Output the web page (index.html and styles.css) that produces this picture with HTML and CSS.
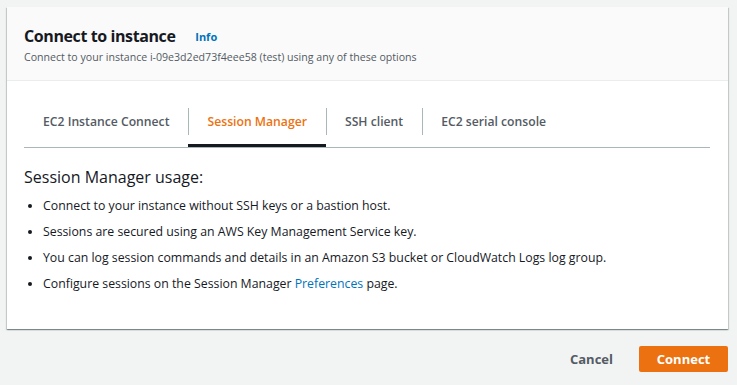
FILE: index.html
```
<!DOCTYPE html>
<html lang="en">
<head>
    <meta charset="UTF-8">
    <meta name="viewport" content="width=device-width, initial-scale=1.0">
    <title>Connect to instance</title>
    <link rel="stylesheet" href="styles.css">
</head>
<body>
    <div class="card">
        <div class="card-header">
            <h2>Connect to instance <a href="#" class="info">Info</a></h2>
            <p>Connect to your instance i-09e3d2ed73f4eee58 (test) using any of these options</p>
        </div>
        <div class="card-body">
            <div class="tabs">
                <button class="tab">EC2 Instance Connect</button>
                <button class="tab active">Session Manager</button>
                <button class="tab">SSH client</button>
                <button class="tab">EC2 serial console</button>
            </div>
            <h3>Session Manager usage:</h3>
            <ul class="usage">
                <li>Connect to your instance without SSH keys or a bastion host.</li>
                <li>Sessions are secured using an AWS Key Management Service key.</li>
                <li>You can log session commands and details in an Amazon S3 bucket or CloudWatch Logs log group.</li>
                <li>Configure sessions on the Session Manager <a href="#">Preferences</a> page.</li>
            </ul>
        </div>
    </div>
    <div class="actions">
        <button class="btn-link">Cancel</button>
        <button class="btn-primary">Connect</button>
    </div>
</body>
</html>
```
FILE: styles.css
```
body {
    margin: 0;
    padding: 7px 9px 0 7px;
    background: #f2f3f3;
    font-family: "Open Sans", Arial, sans-serif;
    color: #16191f;
}
.card {
    background: white;
    box-shadow: 0 1px 1px 0 rgba(0, 28, 36, 0.3), 1px 1px 1px 0 rgba(0, 28, 36, 0.15), -1px 1px 1px 0 rgba(0, 28, 36, 0.15);
}
.card-header {
    background: #fafafa;
    border-bottom: 1px solid #eaeded;
    padding: 17px 17px 15px;
}
.card-header h2 {
    margin: 0;
    font-size: 16px;
    letter-spacing: -0.4px;
    font-weight: 700;
    line-height: 24px;
}
.info {
    font-size: 11px;
    letter-spacing: 0;
    color: #0073bb;
    text-decoration: none;
    margin-left: 16px;
    vertical-align: 1px;
}
.card-header p {
    margin: 0;
    font-size: 10.6px;
    color: #545b64;
    line-height: 16px;
}
.card-body {
    padding: 18px 18px 32px 17px;
}
.tabs {
    display: flex;
    border-bottom: 1px solid #aab7b8;
    margin-bottom: 18px;
}
.tab {
    position: relative;
    background: none;
    border: none;
    font-family: inherit;
    font-size: 12.2px;
    font-weight: 600;
    color: #545b64;
    padding: 0 19px 2px;
    height: 48px;
    line-height: 46px;
    cursor: pointer;
}
.tab + .tab::before {
    content: "";
    position: absolute;
    left: 0;
    top: 9px;
    bottom: 12px;
    border-left: 1px solid #aab7b8;
}
.tab.active {
    color: #ec7211;
    box-shadow: inset 0 -3px 0 #16191f;
}
h3 {
    margin: 0 0 5px;
    font-size: 16px;
    font-weight: 400;
}
.usage {
    margin: 0;
    padding-left: 19px;
    font-size: 12.3px;
    line-height: 26px;
}
.usage a {
    color: #0073bb;
    text-decoration: none;
}
.actions {
    display: flex;
    justify-content: flex-end;
    align-items: center;
    margin-top: 17px;
    gap: 10px;
}
.btn-link {
    background: none;
    border: none;
    font-family: inherit;
    font-size: 13px;
    font-weight: 700;
    color: #545b64;
    padding: 4px 16px;
}
.btn-primary {
    background: #ec7211;
    border: none;
    border-radius: 2px;
    color: white;
    font-family: inherit;
    font-size: 13px;
    font-weight: 700;
    width: 89px;
    height: 26px;
}
```
